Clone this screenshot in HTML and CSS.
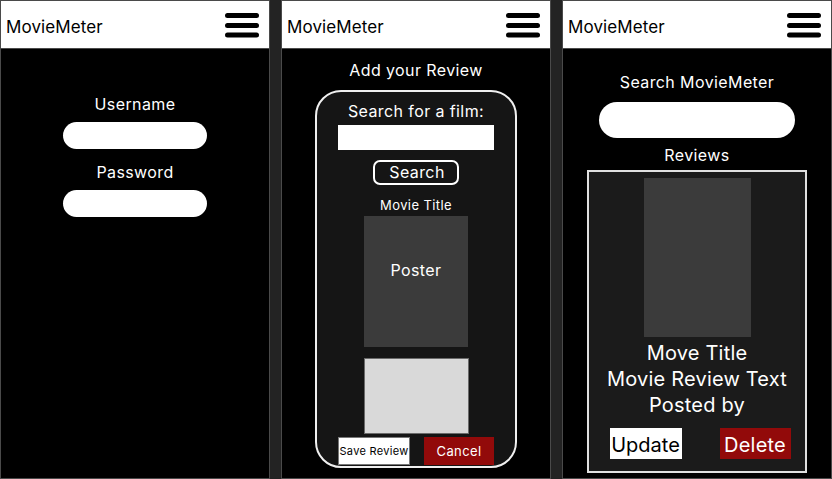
FILE: index.html
```html
<!DOCTYPE html>
<html>
<head>
<meta charset="utf-8">
<link rel="stylesheet" href="styles.css">
</head>
<body>
<div class="screens">
  <section class="phone">
    <header class="bar">
      <span class="brand">MovieMeter</span>
      <svg class="menu" width="34" height="25" viewBox="0 0 34 25"><rect x="0" y="0" width="34" height="5" rx="2.5"/><rect x="0" y="10" width="34" height="5" rx="2.5"/><rect x="0" y="19.5" width="34" height="5" rx="2.5"/></svg>
    </header>
    <div class="login">
      <label class="lbl">Username</label>
      <div class="pill small"></div>
      <label class="lbl pw">Password</label>
      <div class="pill small"></div>
    </div>
  </section>

  <section class="phone">
    <header class="bar">
      <span class="brand">MovieMeter</span>
      <svg class="menu" width="34" height="25" viewBox="0 0 34 25"><rect x="0" y="0" width="34" height="5" rx="2.5"/><rect x="0" y="10" width="34" height="5" rx="2.5"/><rect x="0" y="19.5" width="34" height="5" rx="2.5"/></svg>
    </header>
    <div class="add">
      <h2 class="lbl">Add your Review</h2>
      <div class="form-card">
        <div class="lbl">Search for a film:</div>
        <div class="box-input"></div>
        <div class="search-btn">Search</div>
        <div class="mtitle">Movie Title</div>
        <div class="poster">Poster</div>
        <div class="textarea"></div>
        <div class="actions">
          <div class="save">Save Review</div>
          <div class="cancel">Cancel</div>
        </div>
      </div>
    </div>
  </section>

  <section class="phone">
    <header class="bar">
      <span class="brand">MovieMeter</span>
      <svg class="menu" width="34" height="25" viewBox="0 0 34 25"><rect x="0" y="0" width="34" height="5" rx="2.5"/><rect x="0" y="10" width="34" height="5" rx="2.5"/><rect x="0" y="19.5" width="34" height="5" rx="2.5"/></svg>
    </header>
    <div class="browse">
      <div class="lbl">Search MovieMeter</div>
      <div class="pill big"></div>
      <div class="lbl reviews">Reviews</div>
      <div class="review-card">
        <div class="rposter"></div>
        <div class="rtext">Move Title</div>
        <div class="rtext">Movie Review Text</div>
        <div class="rtext">Posted by</div>
        <div class="ractions">
          <div class="update">Update</div>
          <div class="delete">Delete</div>
        </div>
      </div>
    </div>
  </section>
</div>
</body>
</html>
```
FILE: styles.css
```css
* { box-sizing: border-box; margin: 0; padding: 0; }
html, body { width: 832px; height: 479px; overflow: hidden; }
body {
  background: #232323;
  font-family: Inter, "Noto Sans", sans-serif;
  color: #fff;
  letter-spacing: 0.4px;
}
.screens {
  display: flex;
  gap: 11px;
  height: 479px;
}
.phone {
  width: 270px;
  height: 479px;
  background: #000;
  border: 1px solid #4a4a4a;
  display: flex;
  flex-direction: column;
}
.bar {
  height: 48px;
  background: #fff;
  border-bottom: 1px solid #4a4a4a;
  display: flex;
  align-items: center;
  justify-content: space-between;
  padding: 1px 10px 0 5px;
  flex-shrink: 0;
}
.brand {
  color: #000;
  font-size: 17px;
  letter-spacing: 0.1px;
  margin-top: 3px;
}
.menu { fill: #000; display: block; }

.lbl {
  font-size: 16px;
  line-height: 20px;
  font-weight: 400;
  text-align: center;
}

/* login */
.login {
  display: flex;
  flex-direction: column;
  align-items: center;
  padding-top: 45px;
}
.pill {
  background: #fff;
  border-radius: 20px;
}
.pill.small { width: 144px; height: 27px; margin-top: 8px; }
.login .pw { margin-top: 13px; }

/* add review */
.add {
  display: flex;
  flex-direction: column;
  align-items: center;
  padding-top: 11px;
}
.form-card {
  margin-top: 10px;
  width: 202px;
  height: 378px;
  border: 2px solid #f0f0f0;
  border-radius: 26px;
  background: #151515;
  display: flex;
  flex-direction: column;
  align-items: center;
  padding-top: 9px;
}
.box-input {
  width: 156px;
  height: 25px;
  background: #fff;
  margin-top: 4px;
}
.search-btn {
  margin-top: 10px;
  width: 86px;
  height: 25px;
  border: 2px solid #fff;
  border-radius: 7px;
  font-size: 16px;
  line-height: 21px;
  text-align: center;
  padding-left: 2px;
}
.mtitle {
  margin-top: 12px;
  font-size: 13px;
  line-height: 16px;
}
.poster {
  margin-top: 3px;
  width: 104px;
  height: 131px;
  background: #3b3b3b;
  font-size: 16px;
  text-align: center;
  padding-top: 44px;
}
.textarea {
  margin-top: 11px;
  width: 105px;
  height: 76px;
  background: #d9d9d9;
  border: 1px solid #6a6a6a;
}
.actions {
  margin-top: 3px;
  width: 156px;
  display: flex;
  justify-content: space-between;
}
.save {
  width: 72px;
  height: 28px;
  background: #fff;
  color: #000;
  border: 1px solid #777;
  font-size: 11px;
  letter-spacing: 0.3px;
  line-height: 26px;
  text-align: center;
  white-space: nowrap;
}
.cancel {
  width: 70px;
  height: 28px;
  background: #920a0a;
  font-size: 13px;
  line-height: 28px;
  text-align: center;
}

/* browse */
.browse {
  display: flex;
  flex-direction: column;
  align-items: center;
  padding-top: 23px;
}
.pill.big { width: 196px; height: 36px; margin-top: 10px; }
.browse .reviews { margin-top: 7px; }
.review-card {
  margin-top: 5px;
  width: 220px;
  height: 303px;
  border: 2px solid #e0e0e0;
  background: #1b1b1b;
  display: flex;
  flex-direction: column;
  align-items: center;
  padding-top: 6px;
}
.rposter {
  width: 107px;
  height: 159px;
  background: #3b3b3b;
}
.rtext {
  font-size: 20px;
  line-height: 26px;
  text-align: center;
  letter-spacing: 0.2px;
}
.rposter + .rtext { margin-top: 3px; }
.ractions {
  margin-top: 10px;
  margin-left: 6px;
  width: 181px;
  display: flex;
  justify-content: space-between;
}
.update {
  width: 72px;
  height: 31px;
  background: #fff;
  color: #000;
  font-size: 20px;
  line-height: 28px;
  padding-top: 3px;
  text-align: center;
  letter-spacing: 0;
}
.delete {
  width: 71px;
  height: 31px;
  background: #920a0a;
  font-size: 20px;
  line-height: 28px;
  padding-top: 3px;
  text-align: center;
  letter-spacing: 0.2px;
}
```
